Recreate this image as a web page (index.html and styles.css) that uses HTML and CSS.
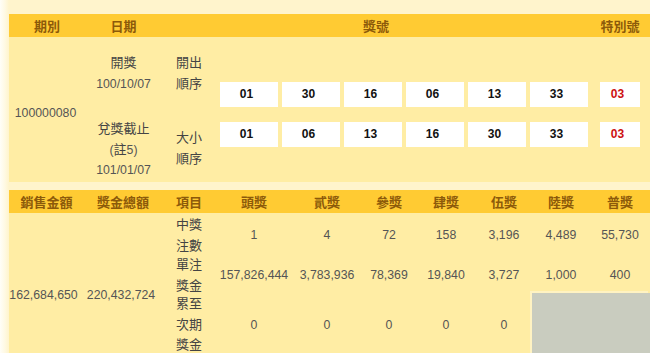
FILE: index.html
```html
<!DOCTYPE html>
<html lang="zh-Hant">
<head>
<meta charset="utf-8">
<title>大樂透</title>
<link rel="stylesheet" href="styles.css">
</head>
<body>
<div class="page">
  <div class="draw">
    <div class="hd">期別</div>
    <div class="hd">日期</div>
    <div class="hd hd-num">獎號</div>
    <div class="hd">特別號</div>

    <div class="period">100000080</div>
    <div class="date-a"><span class="cj">開獎</span><br>100/10/07</div>
    <div class="date-b"><span class="cj">兌獎截止</span><br>(<span class="cj">註</span>5)<br>101/01/07</div>
    <div class="lab lab-a">開出<br>順序</div>
    <div class="lab lab-b">大小<br>順序</div>

    <div class="balls r1">
      <div class="ball">01</div><div class="ball">30</div><div class="ball">16</div><div class="ball">06</div><div class="ball">13</div><div class="ball">33</div>
    </div>
    <div class="sp r1"><div class="ball red">03</div></div>
    <div class="balls r2">
      <div class="ball">01</div><div class="ball">06</div><div class="ball">13</div><div class="ball">16</div><div class="ball">30</div><div class="ball">33</div>
    </div>
    <div class="sp r2"><div class="ball red">03</div></div>
  </div>

  <div class="prize">
    <div class="hd">銷售金額</div>
    <div class="hd">獎金總額</div>
    <div class="hd">項目</div>
    <div class="hd">頭獎</div>
    <div class="hd">貳獎</div>
    <div class="hd">參獎</div>
    <div class="hd">肆獎</div>
    <div class="hd">伍獎</div>
    <div class="hd">陸獎</div>
    <div class="hd">普獎</div>

    <div class="sum s1">162,684,650</div>
    <div class="sum s2">220,432,724</div>

    <div class="item row1">中獎<br>注數</div>
    <div class="v row1">1</div>
    <div class="v row1">4</div>
    <div class="v row1">72</div>
    <div class="v row1">158</div>
    <div class="v row1">3,196</div>
    <div class="v row1">4,489</div>
    <div class="v row1">55,730</div>

    <div class="item row2">單注<br>獎金</div>
    <div class="v row2">157,826,444</div>
    <div class="v row2">3,783,936</div>
    <div class="v row2">78,369</div>
    <div class="v row2">19,840</div>
    <div class="v row2">3,727</div>
    <div class="v row2">1,000</div>
    <div class="v row2">400</div>

    <div class="item row3">累至<br>次期<br>獎金</div>
    <div class="v row3">0</div>
    <div class="v row3">0</div>
    <div class="v row3">0</div>
    <div class="v row3">0</div>
    <div class="v row3">0</div>
    <div class="na"></div>
  </div>
</div>
</body>
</html>
```
FILE: styles.css
```css
html, body {
  margin: 0;
  padding: 0;
}
body {
  background: #FFF4CC;
  font-family: "Liberation Sans", "Noto Sans CJK TC", sans-serif;
  font-size: 12.3px;
  color: #555;
  overflow: hidden;
}
.page {
  padding: 14px 0 0 9px;
  min-height: 100vh;
  box-sizing: border-box;
  background: linear-gradient(to right, #FFFEF8 0, #FFF9E2 5px, #FFF4CC 9px) no-repeat;
  background-size: 9px 100%;
}
.cj {
  font-family: "Noto Sans CJK TC", sans-serif;
  font-size: 13px;
}
.hd {
  background: #FFCB33;
  color: #8C5A0A;
  font-family: "Noto Sans CJK TC", sans-serif;
  font-weight: bold;
  font-size: 13px;
  text-align: center;
  white-space: nowrap;
}

/* draw section */
.draw {
  display: grid;
  grid-template-columns: 76px 77px 56px repeat(6, 62px) 60px;
  grid-template-rows: 23px 73px 72px;
  background: #FFEDA4;
  margin-bottom: 8px;
}
.draw .hd {
  line-height: 23px;
}
.hd-num {
  grid-column: 3 / 10;
}
.period {
  grid-column: 1;
  grid-row: 2 / 4;
  align-self: center;
  text-align: center;
  line-height: 16px;
  padding-top: 7px;
  padding-right: 3px;
}
.date-a {
  grid-column: 2;
  grid-row: 2;
  text-align: center;
  padding-top: 14px;
  line-height: 21px;
}
.date-b {
  grid-column: 2;
  grid-row: 3;
  text-align: center;
  padding-top: 8px;
  line-height: 20px;
}
.date-a .cj, .date-b .cj, .lab, .item {
  color: #444;
}
.lab {
  font-family: "Noto Sans CJK TC", sans-serif;
  font-size: 13px;
  text-align: center;
  line-height: 21px;
  padding-right: 2px;
}
.lab-a {
  grid-column: 3;
  grid-row: 2;
  padding-top: 14px;
}
.lab-b {
  grid-column: 3;
  grid-row: 3;
  padding-top: 16px;
}
.balls {
  grid-column: 4 / 10;
  display: flex;
  gap: 4px;
  padding-left: 2px;
}
.r1 {
  grid-row: 2;
  padding-top: 45px;
}
.r2 {
  grid-row: 3;
  padding-top: 12px;
}
.sp {
  grid-column: 10;
  display: flex;
  justify-content: center;
  align-items: flex-start;
}
.ball {
  box-sizing: border-box;
  width: 58px;
  height: 25px;
  line-height: 25px;
  padding-right: 5px;
  background: #fff;
  color: #111;
  font-family: "Liberation Sans", sans-serif;
  font-weight: bold;
  font-size: 12px;
  text-align: center;
}
.ball.red {
  width: 40px;
  color: #CC1111;
}

/* prize section */
.prize {
  display: grid;
  grid-template-columns: 75px 78px 54px 76px 70px 54px 60px 56px 58px 60px;
  grid-template-rows: 23px 40px 40px 63px;
  background: #FFEDA4;
}
.prize .hd {
  line-height: 23px;
}
.sum {
  grid-row: 2 / 5;
  align-self: center;
  text-align: center;
  line-height: 20px;
  padding-top: 20px;
  white-space: nowrap;
}
.s1 { grid-column: 1; padding-right: 6px; }
.s2 { grid-column: 2; padding-right: 4px; }
.item {
  grid-column: 3;
  align-self: center;
  text-align: center;
  font-family: "Noto Sans CJK TC", sans-serif;
  font-size: 13px;
  line-height: 21px;
  padding-top: 2px;
}
.item.row3 {
  align-self: start;
  padding-top: 0;
  line-height: 20.5px;
}
.row1 { grid-row: 2; }
.row2 { grid-row: 3; }
.row3 { grid-row: 4; }
.v {
  align-self: center;
  text-align: center;
  white-space: nowrap;
  line-height: 16px;
}
.v.row1, .v.row2 {
  padding-top: 3px;
}
.v.row3 {
  align-self: start;
  padding-top: 24px;
}
.na {
  grid-column: 9 / 11;
  grid-row: 4;
  background: #C9CCBF;
  box-shadow: -2px -2px 0 #FFF3C2;
}
```
